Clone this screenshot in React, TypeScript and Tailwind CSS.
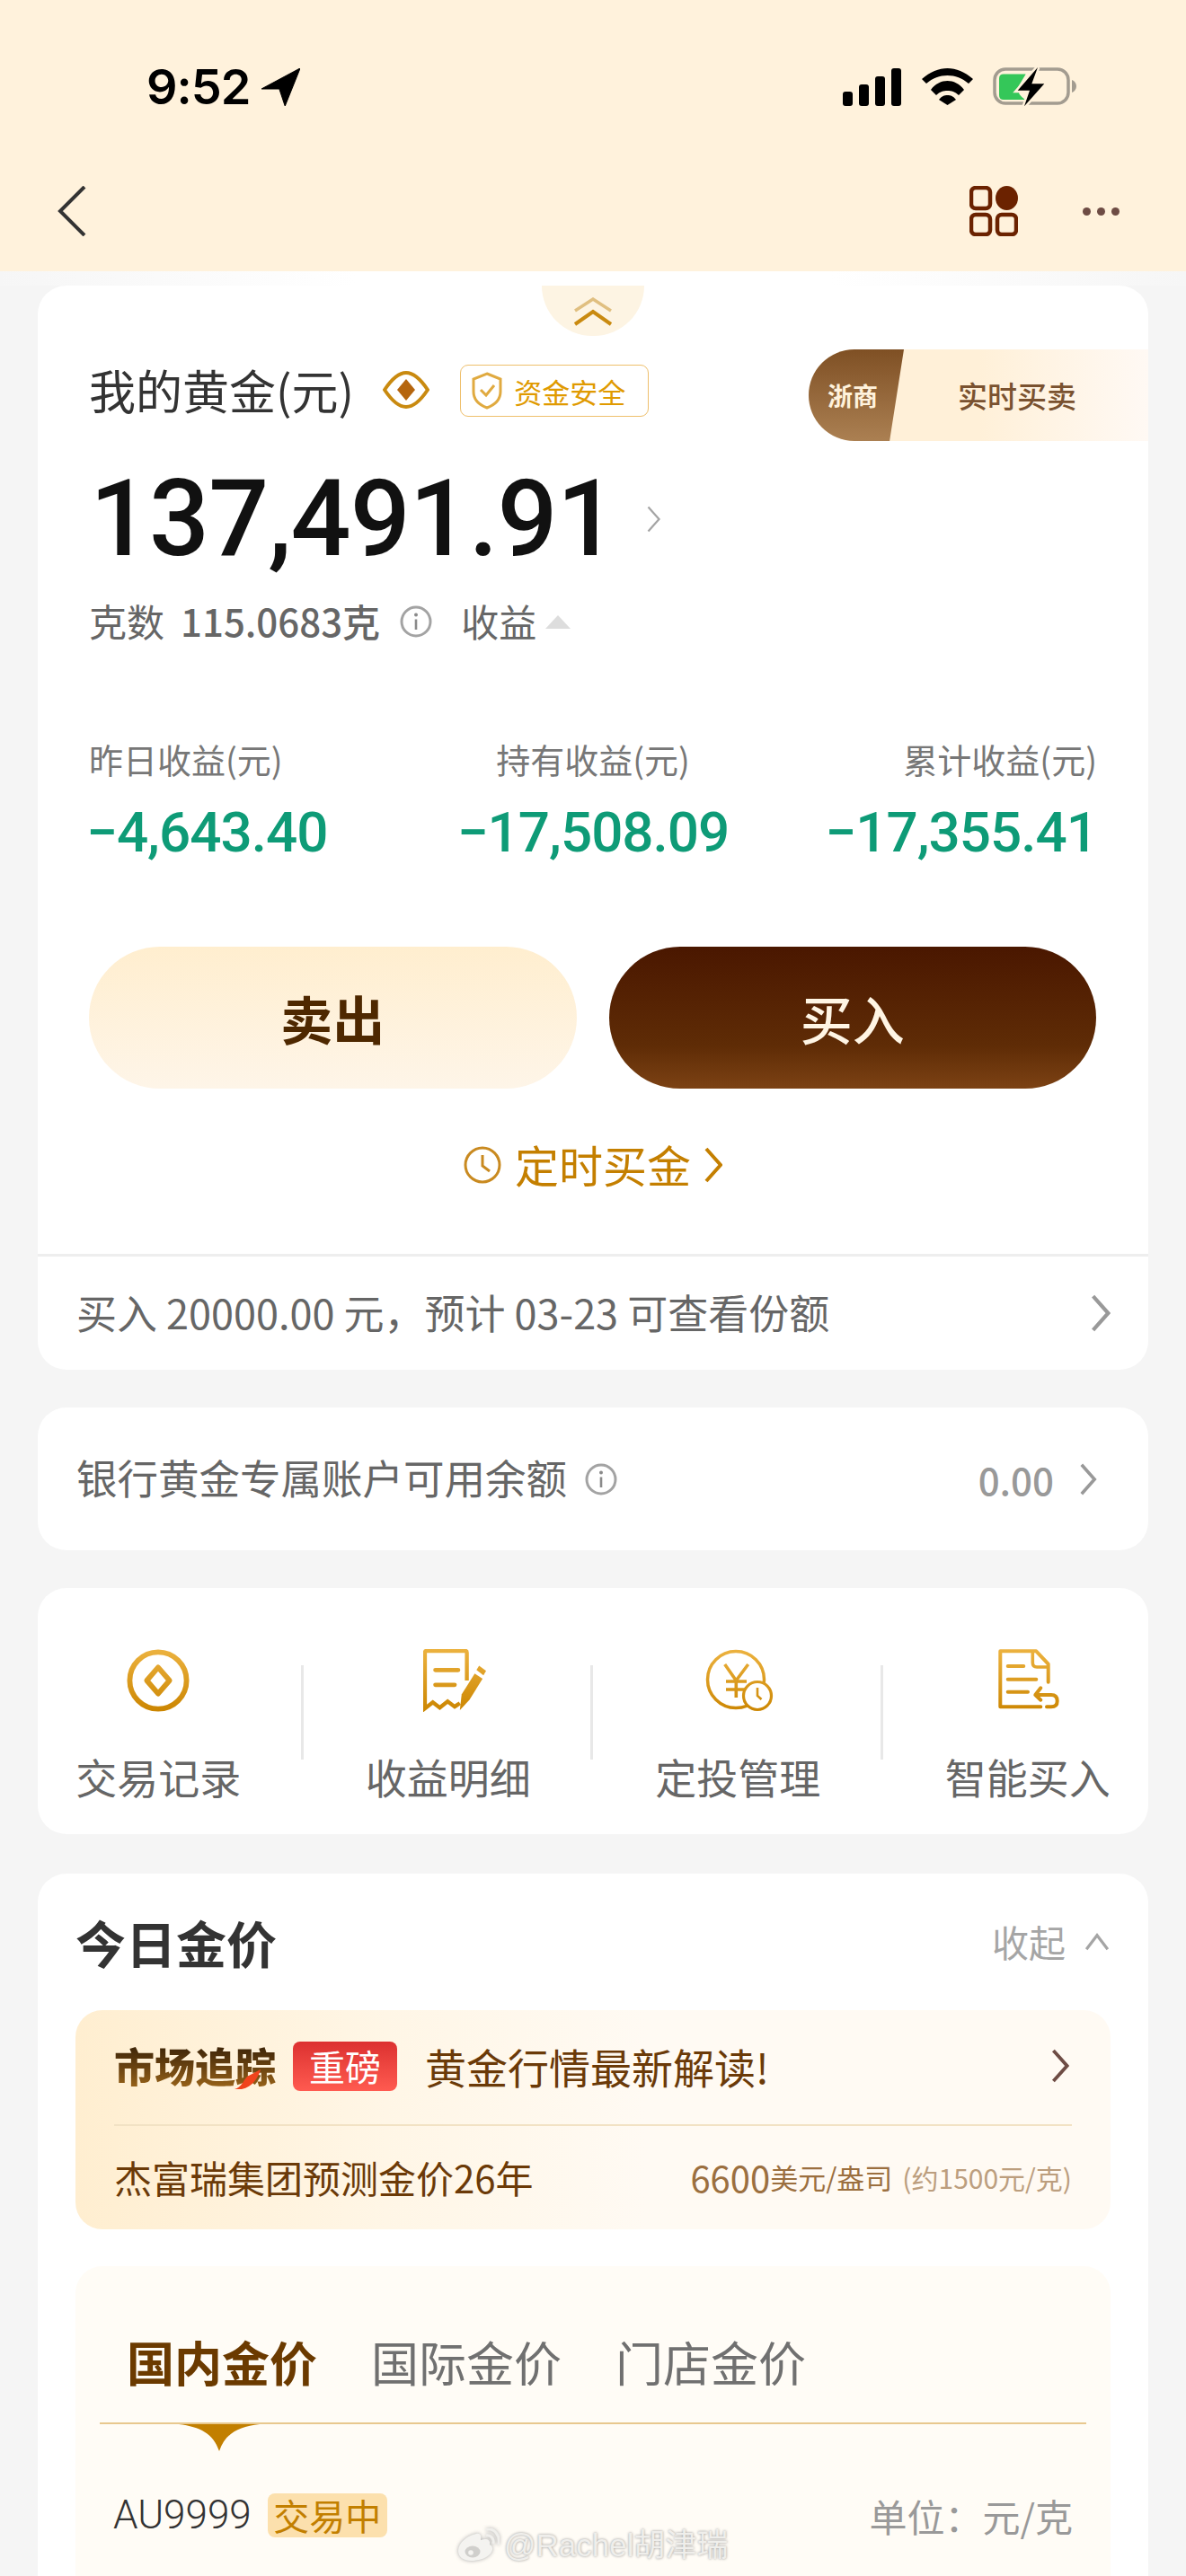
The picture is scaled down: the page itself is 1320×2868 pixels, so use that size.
import React from 'react';

const cjk = "font-['Noto_Sans_CJK_SC',sans-serif]";
const digits = "font-['Roboto','Noto_Sans_CJK_SC',sans-serif]";

function Chevron({ className, stroke = '#999', width = 3 }: { className: string; stroke?: string; width?: number }) {
  return (
    <svg viewBox="0 0 20 40" className={className} fill="none">
      <path d="M2 2 L18 20 L2 38" stroke={stroke} strokeWidth={width} />
    </svg>
  );
}

function InfoIcon({ className }: { className: string }) {
  return (
    <svg viewBox="0 0 36 36" className={className} fill="none">
      <circle cx="18" cy="18" r="16" stroke="#a3a3a3" strokeWidth="3" />
      <circle cx="18" cy="10.5" r="2" fill="#8a8a8a" />
      <path d="M18 15.5 V27" stroke="#8a8a8a" strokeWidth="2.6" />
    </svg>
  );
}

function StatusBar() {
  return (
    <div className="flex h-[44px] items-center justify-between pl-[163px] pr-[122px]">
      <div className="flex items-center gap-[13px]">
        <span className="font-['Inter',sans-serif] text-[54px] font-semibold leading-none tracking-[-1px] text-black">9:52</span>
        <svg viewBox="0 0 41 40" className="h-[42px] w-[43px]">
          <path d="M41 0 L25 40 L19 22 L0 22 Z" fill="#000" stroke="#000" strokeWidth="1" strokeLinejoin="round" />
        </svg>
      </div>
      <div className="flex items-center gap-[22px]">
        <svg viewBox="0 0 66 42" className="h-[42px] w-[66px]" fill="#000">
          <rect x="0" y="26" width="11" height="16" rx="3" />
          <rect x="18" y="18" width="11" height="24" rx="3" />
          <rect x="36" y="9" width="11" height="33" rx="3" />
          <rect x="54" y="0" width="11" height="42" rx="3" />
        </svg>
        <svg viewBox="0 0 57 42" className="h-[42px] w-[57px]" fill="#000">
          <path d="M0 12 C9 4 19 0 28.5 0 C38 0 48 4 57 12 L52 17 C45 11 37 8 28.5 8 C20 8 12 11 5 17 Z" />
          <path d="M10 24 C15 17 22 14 28.5 14 C35 14 42 17 47 24 L41 30 C37 26 33 25 28.5 25 C24 25 20 26 16 30 Z" />
          <path d="M19 35 C22 31 25 30 28.5 30 C32 30 35 31 38 35 L28.5 41 Z" />
        </svg>
        <svg viewBox="0 0 93 44" className="h-[44px] w-[93px]">
          <rect x="2" y="2" width="82" height="38" rx="12" fill="none" stroke="#a39c90" strokeWidth="3.5" />
          <path d="M88 14 C91 15 93 18 93 21 C93 24 91 27 88 28 Z" fill="#a39c90" />
          <path d="M12 7.5 H36.7 L28 22 Q27 30 36 36 H12 Q7 36 7 31 V12.5 Q7 7.5 12 7.5 Z" fill="#34c759" />
          <path d="M50 0 L27.7 25.7 L41 25.7 L35 43.3 L57.3 18.3 L43.3 18.3 Z" fill="#000" stroke="#fff2dc" strokeWidth="5" />
          <path d="M50 0 L27.7 25.7 L41 25.7 L35 43.3 L57.3 18.3 L43.3 18.3 Z" fill="#000" />
        </svg>
      </div>
    </div>
  );
}

function NavBar() {
  return (
    <div className="mt-[88px] flex h-[56px] items-center pl-[64px] pr-[74px]">
      <svg viewBox="0 0 32 56" className="h-[56px] w-[32px]" fill="none">
        <path d="M30 1 L3 28 L30 55" stroke="#333" strokeWidth="4" />
      </svg>
      <svg viewBox="0 0 54 56" className="ml-auto h-[56px] w-[54px]" fill="none" stroke="#6b2200" strokeWidth="4.5">
        <rect x="2" y="2" width="21" height="23" rx="5" />
        <rect x="2" y="32" width="21" height="22" rx="5" />
        <rect x="31" y="32" width="21" height="22" rx="5" />
        <ellipse cx="41.5" cy="13.5" rx="12.5" ry="13.5" fill="#6b2200" stroke="none" />
      </svg>
      <div className="ml-[72px] flex gap-[7px]">
        <span className="h-[9px] w-[9px] rounded-full bg-[#6e4c44]" />
        <span className="h-[9px] w-[9px] rounded-full bg-[#6e4c44]" />
        <span className="h-[9px] w-[9px] rounded-full bg-[#6e4c44]" />
      </div>
    </div>
  );
}

function GoldCard() {
  return (
    <div className="relative overflow-hidden rounded-[32px] bg-white">
      {/* collapse tab */}
      <div className="absolute left-[561px] top-0 flex h-[56px] w-[114px] justify-center rounded-b-[57px] bg-[#fdf4e3] pt-[13px]">
        <svg viewBox="0 0 46 32" className="h-[32px] w-[46px]" fill="none">
          <path d="M3 15 L23 2 L43 15" stroke="#e0bf80" strokeWidth="3.5" />
          <path d="M3 30 L23 16 L43 30" stroke="#c98a10" strokeWidth="4" />
        </svg>
      </div>

      <div className="mt-[71px] flex h-[102px] items-center pl-[57px]">
        <span className="-mt-[12px] text-[52px] leading-none text-[#333]">我的黄金(元)</span>
        <svg viewBox="0 0 52 42" className="-mt-[12px] ml-[32px] h-[42px] w-[52px]" fill="none">
          <path d="M2 21 C12 6 20 2 26 2 C32 2 40 6 50 21 C40 36 32 40 26 40 C20 40 12 36 2 21 Z" stroke="#c98a10" strokeWidth="4" />
          <path d="M26 9 L36 21 L26 33 L16 21 Z" fill="#b5650e" />
        </svg>
        <div className="-mt-[10px] ml-[34px] flex h-[58px] w-[210px] items-center rounded-[9px] border border-[#eebf6c] pl-[11px]">
          <svg viewBox="0 0 36 42" className="h-[42px] w-[36px]" fill="none">
            <path d="M18 2 L33 8 V22 C33 31 26 37 18 40 C10 37 3 31 3 22 V8 Z" stroke="#e0aa40" strokeWidth="3" />
            <path d="M11 20 L17 26 L26 15" stroke="#e0aa40" strokeWidth="3" />
          </svg>
          <span className="ml-[12px] text-[31px] leading-none text-[#e09a00]">资金安全</span>
        </div>
        {/* partner pill */}
        <div className="relative ml-auto flex h-[102px] w-[378px] items-center overflow-hidden rounded-l-[51px] bg-gradient-to-r from-[#fff0d8] via-[#fff0d8] to-[#fff9f4] pl-[166px]">
          <div className="absolute left-0 top-0 flex h-full w-[106px] items-center bg-gradient-to-b from-[#7f5024] to-[#ab8052] pl-[21px] [clip-path:polygon(0_0,100%_0,85%_100%,0_100%)]">
            <span className="text-[28px] font-bold leading-none text-[#fff2dc]">浙商</span>
          </div>
          <span className="text-[33px] font-medium leading-none text-[#7a5230]">实时买卖</span>
        </div>
      </div>

      <div className="mt-[32px] flex h-[110px] items-center pl-[58px]">
        <span className={`${digits} text-[118px] font-medium leading-none tracking-[-1px] text-[#111]`}>137,491.91</span>
        <Chevron className="ml-[33px] h-[30px] w-[17px]" stroke="#a5a5a5" />
      </div>

      <div className="mt-[29px] flex h-[60px] items-center pl-[57px]">
        <span className="pb-[2px] text-[42px] leading-none text-[#666]">克数</span>
        <span className="ml-[18px] pb-[2px] text-[42px] font-medium leading-none text-[#666]">115.0683克</span>
        <InfoIcon className="ml-[22px] h-[36px] w-[36px]" />
        <span className="ml-[32px] pb-[2px] text-[42px] leading-none text-[#666]">收益</span>
        <span className="ml-[10px] h-0 w-0 border-x-[14px] border-b-[15px] border-x-transparent border-b-[#ddd]" />
      </div>

      <div className="mt-[98px] grid grid-cols-3 pl-[57px] pr-[57px]">
        {[
          { label: '昨日收益(元)', value: '−4,643.40', align: 'items-start', shift: '-ml-[3px]' },
          { label: '持有收益(元)', value: '−17,508.09', align: 'items-center', shift: '' },
          { label: '累计收益(元)', value: '−17,355.41', align: 'items-end', shift: '' },
        ].map((s) => (
          <div key={s.label} className={`flex flex-col ${s.align}`}>
            <span className="flex h-[50px] items-center text-[38px] leading-none text-[#777]">{s.label}</span>
            <span className={`${digits} ${s.shift} mt-[22px] flex h-[70px] items-center text-[62px] font-medium leading-none tracking-[-1px] text-[#0e9b77]`}>{s.value}</span>
          </div>
        ))}
      </div>

      <div className="mt-[92px] flex gap-[36px] pl-[57px] pr-[58px]">
        <button className="flex h-[158px] flex-1 items-center justify-center rounded-full bg-gradient-to-b from-[#ffeecf] to-[#fef5e8] text-[58px] font-bold text-[#4e2800]">卖出</button>
        <button className="flex h-[158px] flex-1 items-center justify-center rounded-full bg-[linear-gradient(180deg,#4a1700_0%,#5f2c06_70%,#7c4214_100%)] text-[58px] font-medium text-[#fff5e4]">买入</button>
      </div>

      <div className="mt-[55px] flex h-[60px] items-center justify-center text-[#c47f00]">
        <svg viewBox="0 0 42 42" className="h-[42px] w-[42px]" fill="none">
          <circle cx="21" cy="21" r="19" stroke="#c98a20" strokeWidth="3" />
          <path d="M21 10 V22 L29 28" stroke="#c98a20" strokeWidth="3" />
        </svg>
        <span className="ml-[15px] pb-[3px] text-[49px] leading-none">定时买金</span>
        <Chevron className="ml-[15px] h-[42px] w-[20px]" stroke="#c47f00" width={4} />
      </div>

      <div className="mt-[69px] border-t-[3px] border-[#eee]" />
      <div className="flex h-[126px] items-center pl-[43px] pr-[42px]">
        <span className="pb-[3px] text-[45px] leading-none text-[#666]">买入 20000.00 元，预计 03-23 可查看份额</span>
        <Chevron className="ml-auto h-[42px] w-[22px]" stroke="#999" width={4} />
      </div>
    </div>
  );
}

function BalanceCard() {
  return (
    <div className="mt-[42px] flex h-[159px] items-center rounded-[32px] bg-white pl-[43px] pr-[57px]">
      <span className="pb-[3px] text-[45.5px] leading-none text-[#666]">银行黄金专属账户可用余额</span>
      <InfoIcon className="ml-[20px] h-[36px] w-[36px]" />
      <span className="ml-auto text-[42px] font-medium leading-none text-[#999]">0.00</span>
      <Chevron className="ml-[28px] h-[36px] w-[20px]" stroke="#999" width={4} />
    </div>
  );
}

function GradientDefs() {
  return (
    <svg className="absolute h-0 w-0">
      <defs>
        <linearGradient id="gold" gradientUnits="userSpaceOnUse" x1="0" y1="0" x2="0" y2="72">
          <stop offset="0" stopColor="#ecb23f" />
          <stop offset="1" stopColor="#cb8500" />
        </linearGradient>
      </defs>
    </svg>
  );
}

const shortcuts = [
  {
    label: '交易记录',
    box: 'h-[70px] w-[70px]',
    view: '0 0 72 72',
    icon: (
      <>
        <circle cx="36" cy="36" r="32.5" stroke="url(#gold)" strokeWidth="6" />
        <path d="M36 21 L49 36 L36 51 L23 36 Z" stroke="url(#gold)" strokeWidth="6" strokeLinejoin="round" />
      </>
    ),
  },
  {
    label: '收益明细',
    box: 'ml-[14px] h-[70px] w-[70px]',
    view: '0 0 72 72',
    icon: (
      <>
        <path d="M50 36 V4 Q50 2 48 2 H4 Q2 2 2 4 V68 L11 61 L19 67 L28 60 L36 66 L42 62" stroke="url(#gold)" strokeWidth="4.5" />
        <path d="M14 24 H40 M14 41 H36" stroke="url(#gold)" strokeWidth="5" strokeLinecap="round" />
        <path d="M42 70 L44 52 L59 28 L68 34 L53 58 Z" fill="url(#gold)" />
        <path d="M61 24 L64 19 L72 25 L69 30 Z" fill="url(#gold)" />
      </>
    ),
  },
  {
    label: '定投管理',
    box: 'ml-[4px] h-[70px] w-[76px]',
    view: '0 0 76 70',
    icon: (
      <>
        <circle cx="34" cy="34" r="31.5" stroke="url(#gold)" strokeWidth="3.5" />
        <path d="M21.7 17 L34.3 35 L47.7 17 M34.3 35 V54 M23 36 H46 M23 45 H46" stroke="url(#gold)" strokeWidth="3.6" />
        <circle cx="58" cy="52" r="15.5" fill="#fff" stroke="url(#gold)" strokeWidth="3.2" />
        <path d="M58 43 V52 L62.5 56" stroke="url(#gold)" strokeWidth="2.6" />
      </>
    ),
  },
  {
    label: '智能买入',
    box: 'ml-[3px] h-[70px] w-[70px]',
    view: '0 0 70 70',
    icon: (
      <>
        <path d="M48.3 64.3 H3.3 V2.3 H43.3 L56.7 16.7 V36.7" stroke="url(#gold)" strokeWidth="4" strokeLinecap="round" strokeLinejoin="round" />
        <path d="M39.3 3 V15 Q39.3 20 44 20 H56" stroke="url(#gold)" strokeWidth="3.6" />
        <path d="M11.7 19 H29.3 M11.7 33.7 H43.3 M11.7 47.7 H34" stroke="url(#gold)" strokeWidth="4" strokeLinecap="round" />
        <path d="M48.3 43.3 L42.3 51 L48.3 56.7 M42.3 51 H60 Q66.7 51 66.7 57.7 Q66.7 64.3 60 64.3 H55" stroke="url(#gold)" strokeWidth="4" strokeLinecap="round" strokeLinejoin="round" />
      </>
    ),
  },
];

function ShortcutCard() {
  return (
    <div className="mt-[42px] h-[274px] rounded-[32px] bg-white">
      <div className="-mx-[27px] grid grid-cols-4 pt-[68px]">
        {shortcuts.map((s, i) => (
          <div key={s.label} className="relative flex flex-col items-center">
            <svg viewBox={s.view} className={s.box} fill="none">
              {s.icon}
            </svg>
            <span className="mt-[41px] flex h-[60px] items-center text-[46px] leading-none text-[#666]">{s.label}</span>
            {i < 3 && <span className="absolute right-0 top-[18px] h-[105px] w-[3px] bg-[#e8e8e8]" />}
          </div>
        ))}
      </div>
    </div>
  );
}

function PriceCard() {
  return (
    <div className="mt-[44px] rounded-t-[32px] bg-white px-[42px] pb-[200px]">
      <div className="flex h-[152px] items-center">
        <span className="text-[56px] font-bold leading-none text-[#333]">今日金价</span>
        <span className="ml-auto pb-[2px] text-[41px] leading-none text-[#a5a5a5]">收起</span>
        <svg viewBox="0 0 30 22" className="ml-[20px] h-[20px] w-[30px]" fill="none">
          <path d="M2 20 L15 3 L28 20" stroke="#a5a5a5" strokeWidth="3.5" />
        </svg>
      </div>

      {/* market banner */}
      <div className="h-[244px] rounded-[30px] bg-[linear-gradient(90deg,#ffeed0_0%,#fff6e6_30%,#fffaf3_55%,#fffaf3_100%)] px-[43px]">
        <div className="flex h-[127px] items-center pb-[3px]">
          <span className="relative">
            <span className="bg-gradient-to-b from-[#2a1705] to-[#a86e1c] bg-clip-text text-[45px] font-black leading-none text-transparent">市场追踪</span>
            <svg viewBox="0 0 29 22" className="absolute left-[134px] top-[27px] h-[22px] w-[29px]">
              <path d="M0 22 C8 20 10 12 14 8 L29 0 C27 8 20 20 8 22 Z" fill="#f0441c" />
            </svg>
          </span>
          <span className="ml-[19px] flex h-[55px] w-[116px] items-center justify-center rounded-[8px] bg-gradient-to-b from-[#dc3030] to-[#ff5a50] text-[40px] leading-none text-white">重磅</span>
          <span className="ml-[31px] text-[46px] leading-none text-[#6b3a08]">黄金行情最新解读!</span>
          <Chevron className="ml-auto mr-[3px] h-[38px] w-[20px]" stroke="#6e4c44" width={4} />
        </div>
        <div className="border-t-[2px] border-[#f2e2c4]" />
        <div className="flex h-[115px] items-center pb-[2px]">
          <span className="text-[42px] leading-none text-[#6b3a08]">杰富瑞集团预测金价26年</span>
          <span className="ml-auto text-[40px] leading-none text-[#9b6f3f]">6600</span>
          <span className="text-[31px] leading-none text-[#9b6f3f]">美元/盎司</span>
          <span className="ml-[11px] text-[30px] leading-none text-[#bc9e7e]">(约1500元/克)</span>
        </div>
      </div>

      {/* price panel */}
      <div className="mt-[41px] h-[420px] rounded-t-[30px] bg-[#fffcf6] px-[27px]">
        <div className="flex h-[174px] items-end gap-[60px] pb-[41px] pl-[30px]">
          <span className="text-[53px] font-bold leading-none text-[#6b3a00]">国内金价</span>
          <span className="text-[53px] leading-none text-[#707070]">国际金价</span>
          <span className="text-[53px] leading-none text-[#707070]">门店金价</span>
        </div>
        <div className="border-t-[2px] border-[#e8c88e]" />
        <svg viewBox="0 0 90 30" className="ml-[88px] h-[30px] w-[90px]">
          <path d="M0 0 H90 C66 3 52 10 45 30 C38 10 24 3 0 0 Z" fill="#c27f00" />
        </svg>
        <div className="mt-[46px] flex h-[50px] items-center pl-[15px] pr-[15px]">
          <span className={`${digits} text-[44px] font-light leading-none text-[#333]`}>AU9999</span>
          <span className="ml-[18px] flex h-[49px] w-[133px] items-center justify-center rounded-[8px] bg-[#fce0ad] text-[40px] leading-none text-[#c27f00]">交易中</span>
          <span className="ml-auto mt-[2px] text-[42px] leading-none text-[#999]">单位：元/克</span>
        </div>
      </div>
    </div>
  );
}

function Watermark() {
  return (
    <div className="absolute left-[508px] top-[2815px] flex items-center gap-[5px]">
      <svg viewBox="0 0 48 36" className="h-[36px] w-[48px] [filter:drop-shadow(0_0_2px_#a8a8a8)]" fill="none">
        <path d="M2 25 C2 16 12 8 22 6 C27 5 28 9 27 13 C33 11 38 12 37 18 C41 20 41 24 38 28 C33 34 24 36 16 36 C8 36 2 32 2 25 Z" fill="#f4f3f0" />
        <ellipse cx="18" cy="26" rx="8.5" ry="6.5" fill="#d0cfcc" />
        <circle cx="16" cy="27" r="2.8" fill="#f4f3f0" />
        <path d="M33 8 C38 7 42 11 41 17" stroke="#f0efec" strokeWidth="3" />
        <path d="M33 1 C42 -1 49 8 47 18" stroke="#f0efec" strokeWidth="3" />
      </svg>
      <span className="font-['Liberation_Sans','Noto_Sans_CJK_SC',sans-serif] text-[35px] leading-none text-[#efeeeb] [text-shadow:0_0_3px_#8f8f8f]">@Rachel胡津瑞</span>
    </div>
  );
}

export default function App() {
  return (
    <div className={`${cjk} relative h-[2868px] w-[1320px] overflow-hidden bg-[#f5f5f5]`}>
      <GradientDefs />
      <div className="h-[302px] bg-[#fff2dc] pt-[75px]">
        <StatusBar />
        <NavBar />
      </div>
      <div className="h-[16px] bg-[linear-gradient(90deg,#f6f6f6_0%,#fff_30%,#fff_70%,#f6f6f6_100%)]" />
      <div className="px-[42px]">
        <GoldCard />
        <BalanceCard />
        <ShortcutCard />
        <PriceCard />
      </div>
      <Watermark />
    </div>
  );
}
